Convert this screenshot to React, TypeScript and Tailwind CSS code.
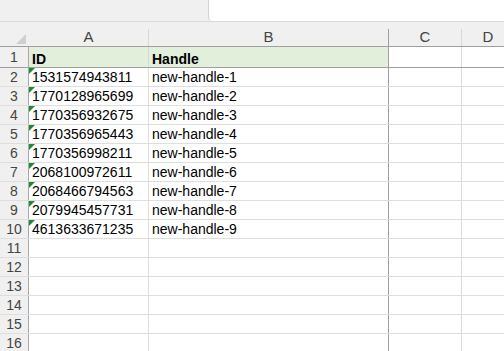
const ROWS: [string, string][] = [
  ["1531574943811", "new-handle-1"],
  ["1770128965699", "new-handle-2"],
  ["1770356932675", "new-handle-3"],
  ["1770356965443", "new-handle-4"],
  ["1770356998211", "new-handle-5"],
  ["2068100972611", "new-handle-6"],
  ["2068466794563", "new-handle-7"],
  ["2079945457731", "new-handle-8"],
  ["4613633671235", "new-handle-9"],
];

const COLS = [
  { letter: "A", w: "w-[120px]", sep: "bg-[#d8d8d8]" },
  { letter: "B", w: "w-[240px]", sep: "bg-[#9f9f9f]" },
  { letter: "C", w: "w-[73px]", sep: "bg-[#d8d8d8]" },
];

function RowLabel({ n }: { n: number }) {
  return (
    <div className="w-[29px] shrink-0 flex items-center justify-center bg-[#f0f0f0] border-r border-[#a9a9a9] text-[#444] text-[14px] leading-[16px]">
      {n}
    </div>
  );
}

function Triangle() {
  return (
    <svg className="absolute left-0 top-0" width="6" height="6" viewBox="0 0 6 6">
      <polygon points="0,0 6,0 0,6" fill="#1e8a38" />
    </svg>
  );
}

export default function App() {
  const empty = [11, 12, 13, 14, 15, 16];

  return (
    <div className="w-[504px] h-[351px] overflow-hidden bg-white font-['Liberation_Sans',Arial,sans-serif] text-black">
      {/* top band with the name box */}
      <div className="h-[21px] bg-[#f0f0f0] flex">
        <div className="ml-[208px] flex-1 bg-white border-l border-[#d2d2d2] rounded-bl-[4px]" />
      </div>

      {/* column headers */}
      <div className="flex h-[26px] bg-[#f0f0f0] border-t border-b border-t-[#dadada] border-b-[#9f9f9f]">
        <div className="w-[29px] shrink-0 flex items-end justify-end pr-[3px] pb-[2px]">
          <svg width="10" height="10" viewBox="0 0 10 10">
            <polygon points="10,0 10,10 0,10" fill="#cfcfcf" />
          </svg>
        </div>
        {COLS.map((c) => (
          <div key={c.letter} className={`${c.w} shrink-0 flex`}>
            <div className="flex-1 flex items-end justify-center pb-[1px] text-[15px] leading-[16px] text-[#444]">{c.letter}</div>
            <div className={`w-px self-end h-[17px] ${c.sep}`} />
          </div>
        ))}
        <div className="flex-1 flex items-end justify-center pb-[1px] text-[15px] leading-[16px] text-[#444]">
          <span className="ml-[10px]">D</span>
        </div>
      </div>

      {/* row 1 */}
      <div className="flex h-[21px] border-b border-[#9f9f9f]">
        <RowLabel n={1} />
        <div className="w-[120px] shrink-0 bg-[#e2efda] border-r border-[#d8d8d8] flex items-end px-[3px] font-bold text-[14px] leading-[16px]">ID</div>
        <div className="w-[240px] shrink-0 bg-[#e2efda] border-r border-[#9f9f9f] flex items-end px-[3px] font-bold text-[14px] leading-[16px]">Handle</div>
        <div className="w-[73px] shrink-0 border-r border-[#dadada]" />
        <div className="flex-1" />
      </div>

      {ROWS.map(([id, handle], i) => (
        <div key={id} className="flex h-[19px] border-b border-[#dedede] text-[14px] leading-[16px]">
          <RowLabel n={i + 2} />
          <div className="relative w-[120px] shrink-0 border-r border-[#dedede] flex items-center px-[3px]">
            <Triangle />
            {id}
          </div>
          <div className="w-[240px] shrink-0 border-r border-[#9f9f9f] flex items-center px-[3px]">{handle}</div>
          <div className="w-[73px] shrink-0 border-r border-[#dadada]" />
          <div className="flex-1" />
        </div>
      ))}

      {empty.map((n) => (
        <div key={n} className="flex h-[19px] border-b border-[#dedede]">
          <RowLabel n={n} />
          <div className="w-[120px] shrink-0 border-r border-[#dedede]" />
          <div className="w-[240px] shrink-0 border-r border-[#9f9f9f]" />
          <div className="w-[73px] shrink-0 border-r border-[#dadada]" />
          <div className="flex-1" />
        </div>
      ))}
    </div>
  );
}
